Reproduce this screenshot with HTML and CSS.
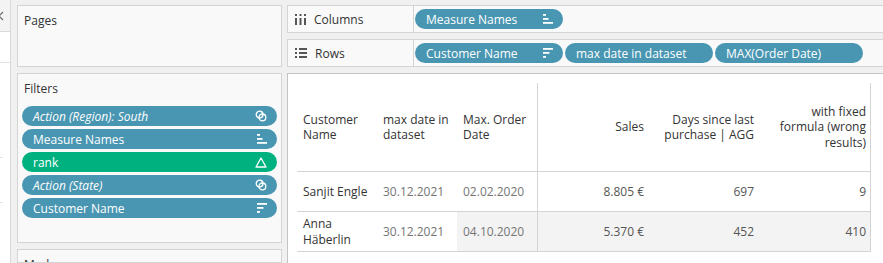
FILE: index.html
```html
<!DOCTYPE html>
<html lang="en">
<head>
    <meta charset="UTF-8">
    <title>Sheet - Days since last purchase</title>
    <link rel="stylesheet" href="styles.css">
</head>
<body>
    <div class="app">
        <aside class="strip">
            <div class="strip-head">
                <svg class="strip-close" width="10" height="31" viewBox="0 0 10 31">
                    <path d="M-5 12 L3 20 M3 12 L-5 20" stroke="#666" stroke-width="1.2" fill="none"/>
                </svg>
            </div>
            <div class="strip-row first"></div>
            <div class="strip-row mid"></div>
            <div class="strip-row last"></div>
        </aside>

        <div class="side">
            <section class="card pages">
                <h3>Pages</h3>
            </section>
            <section class="card filters">
                <h3>Filters</h3>
                <div class="pill-list">
                    <div class="pill"><em>Action (Region): South</em>
                        <svg class="ico" width="12" height="12" viewBox="0 0 12 12"><circle cx="4.6" cy="4.6" r="3.4" stroke="#fff" stroke-width="1.3" fill="none"/><circle cx="7.4" cy="7.4" r="3.4" stroke="#fff" stroke-width="1.3" fill="none"/></svg>
                    </div>
                    <div class="pill">Measure Names
                        <svg class="ico" width="10" height="10" viewBox="0 0 10 10"><rect x="0" y="0" width="3" height="1.8" fill="#fff"/><rect x="0" y="4" width="5.5" height="1.8" fill="#fff"/><rect x="0" y="8" width="10" height="1.8" fill="#fff"/></svg>
                    </div>
                    <div class="pill measure">rank
                        <svg class="ico" width="12" height="11" viewBox="0 0 12 11"><path d="M6 1 L11 10 L1 10 Z" stroke="#fff" stroke-width="1.3" fill="none" stroke-linejoin="round"/></svg>
                    </div>
                    <div class="pill"><em>Action (State)</em>
                        <svg class="ico" width="12" height="12" viewBox="0 0 12 12"><circle cx="4.6" cy="4.6" r="3.4" stroke="#fff" stroke-width="1.3" fill="none"/><circle cx="7.4" cy="7.4" r="3.4" stroke="#fff" stroke-width="1.3" fill="none"/></svg>
                    </div>
                    <div class="pill">Customer Name
                        <svg class="ico" width="10" height="10" viewBox="0 0 10 10"><rect x="0" y="0" width="10" height="1.8" fill="#fff"/><rect x="0" y="4" width="6.5" height="1.8" fill="#fff"/><rect x="0" y="8" width="3" height="1.8" fill="#fff"/></svg>
                    </div>
                </div>
            </section>
            <section class="card marks">
                <h3>Marks</h3>
            </section>
        </div>

        <div class="main">
            <div class="shelf">
                <div class="shelf-label">
                    <svg class="shelf-ico" width="11" height="11" viewBox="0 0 11 11"><g fill="#555"><rect x="0" y="0" width="2" height="2"/><rect x="0" y="4" width="2" height="7"/><rect x="4.5" y="0" width="2" height="2"/><rect x="4.5" y="4" width="2" height="7"/><rect x="9" y="0" width="2" height="2"/><rect x="9" y="4" width="2" height="7"/></g></svg>
                    Columns
                </div>
                <div class="shelf-pills">
                    <div class="pill wide">Measure Names
                        <svg class="ico" width="10" height="10" viewBox="0 0 10 10"><rect x="0" y="0" width="3" height="1.8" fill="#fff"/><rect x="0" y="4" width="5.5" height="1.8" fill="#fff"/><rect x="0" y="8" width="10" height="1.8" fill="#fff"/></svg>
                    </div>
                </div>
            </div>
            <div class="shelf">
                <div class="shelf-label">
                    <svg class="shelf-ico" width="12" height="10" viewBox="0 0 12 10"><g fill="#555"><rect x="0" y="0" width="2" height="2"/><rect x="4" y="0" width="8" height="2"/><rect x="0" y="4" width="2" height="2"/><rect x="4" y="4" width="8" height="2"/><rect x="0" y="8" width="2" height="2"/><rect x="4" y="8" width="8" height="2"/></g></svg>
                    Rows
                </div>
                <div class="shelf-pills">
                    <div class="pill wide">Customer Name
                        <svg class="ico" width="10" height="10" viewBox="0 0 10 10"><rect x="0" y="0" width="10" height="1.8" fill="#fff"/><rect x="0" y="4" width="6.5" height="1.8" fill="#fff"/><rect x="0" y="8" width="3" height="1.8" fill="#fff"/></svg>
                    </div>
                    <div class="pill wide">max date in dataset</div>
                    <div class="pill wide">MAX(Order Date)</div>
                </div>
            </div>

            <div class="viz">
                <div class="crosstab">
                    <div class="cell head">Customer Name</div>
                    <div class="cell head">max date in dataset</div>
                    <div class="cell head sep">Max. Order Date</div>
                    <div class="cell head num"><span>Sales</span></div>
                    <div class="cell head num"><span>Days since last purchase | AGG</span></div>
                    <div class="cell head num end"><span>with fixed formula (wrong results)</span></div>

                    <div class="cell">Sanjit Engle</div>
                    <div class="cell date">30.12.2021</div>
                    <div class="cell date sep">02.02.2020</div>
                    <div class="cell num val">8.805 €</div>
                    <div class="cell num val">697</div>
                    <div class="cell num val end">9</div>

                    <div class="cell">Anna Häberlin</div>
                    <div class="cell date">30.12.2021</div>
                    <div class="cell date sep shade">04.10.2020</div>
                    <div class="cell num val shade">5.370 €</div>
                    <div class="cell num val shade">452</div>
                    <div class="cell num val end shade">410</div>
                </div>
            </div>
        </div>
    </div>
</body>
</html>
```

FILE: styles.css
```css
body {
    margin: 0;
    background: #f0f0f0;
    font-family: 'Open Sans', sans-serif;
    font-size: 12px;
    color: #333;
    overflow: hidden;
}

.app {
    display: flex;
    height: 263px;
    overflow: hidden;
}

/* Left data strip */
.strip {
    width: 10px;
    background: #fff;
    border-right: 1px solid #dadada;
    display: flex;
    flex-direction: column;
}

.strip-head {
    height: 31px;
    background: #f3f3f3;
    border-bottom: 1px solid #dadada;
}

.strip-close {
    display: block;
}

.strip-row {
    border-bottom: 1px solid #e2e2e2;
}

.strip-row.first {
    height: 30px;
}

.strip-row.mid {
    height: 94px;
    width: 3px;
}

.strip-row.last {
    height: 44px;
    width: 3px;
}

/* Cards: pages, filters, marks */
.side {
    width: 265px;
    margin-left: 6px;
    display: flex;
    flex-direction: column;
}

.card {
    background: #f9f9f9;
    border: 1px solid #d4d4d4;
    box-sizing: border-box;
    margin-top: 6px;
    flex-shrink: 0;
}

.card h3 {
    margin: 0;
    padding: 7px 0 0 6px;
    font-size: 12px;
    font-weight: normal;
    line-height: 16px;
    color: #333;
}

.pages {
    margin-top: 5px;
    height: 62px;
}

.filters {
    height: 170px;
}

.marks {
    flex: 1 1 0;
    min-height: 0;
    overflow: hidden;
}

.pill-list {
    display: flex;
    flex-direction: column;
    gap: 3px;
    padding: 9px 4px 0 4px;
}

.pill {
    height: 20px;
    flex: none;
    border-radius: 10px;
    background: #4996b2;
    color: #fff;
    display: flex;
    align-items: center;
    justify-content: space-between;
    padding: 0 10px 0 11px;
    box-sizing: border-box;
    white-space: nowrap;
    font-size: 12px;
}

.pill em {
    font-style: italic;
}

.pill.measure {
    background: #00b180;
}

.pill.wide {
    width: 148px;
}

.ico {
    display: block;
    flex: none;
}

/* Shelves */
.main {
    flex: 1;
    min-width: 0;
    margin-left: 5px;
    display: flex;
    flex-direction: column;
}

.shelf {
    height: 28px;
    flex-shrink: 0;
    margin-top: 6px;
    box-sizing: border-box;
    border: 1px solid #d4d4d4;
    border-right: none;
    background: #f9f9f9;
    display: flex;
}

.shelf:first-child {
    margin-top: 5px;
}

.shelf-label {
    width: 126px;
    flex: none;
    box-sizing: border-box;
    border-right: 1px solid #d4d4d4;
    display: flex;
    align-items: center;
    gap: 8px;
    padding-left: 7px;
    color: #333;
}

.shelf-pills {
    display: flex;
    align-items: center;
    gap: 2px;
    padding-left: 1px;
}

/* Viz */
.viz {
    flex: 1;
    margin-top: 6px;
    background: #fff;
    border-top: 1px solid #c4c4c4;
    border-left: 1px solid #c4c4c4;
    padding: 9px 0 0 9px;
}

.crosstab {
    display: grid;
    grid-template-columns: 80px 80px 81px 110px 110px 113px;
    grid-template-rows: 89px 40px 40px;
    line-height: 15.5px;
}

.cell {
    display: flex;
    align-items: center;
    box-sizing: border-box;
    border-bottom: 1px solid #d4d4d4;
    padding-left: 6px;
}

.cell.sep,
.cell.end {
    border-right: 1px solid #d4d4d4;
}

.cell.num {
    justify-content: flex-end;
    text-align: right;
    padding: 0 4px 0 12px;
}

.cell.date {
    color: #767676;
}

.cell.val {
    color: #555;
}

.cell.shade {
    background: #f3f3f3;
}
```
